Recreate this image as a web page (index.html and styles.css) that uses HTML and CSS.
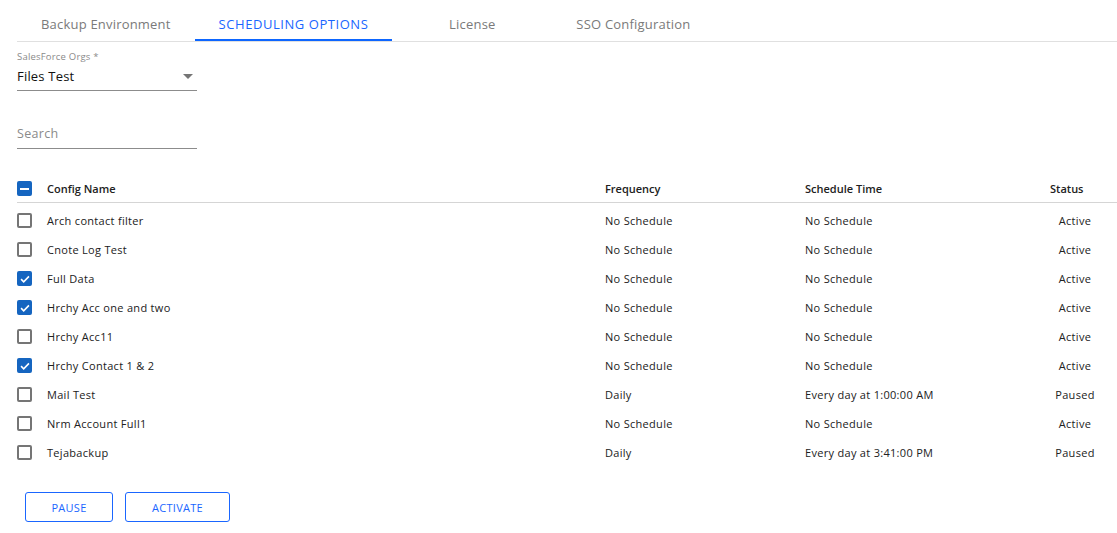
FILE: index.html
```html
<!DOCTYPE html>
<html>
<head>
<meta charset="utf-8">
<link rel="stylesheet" href="styles.css">
</head>
<body>
<div class="page">
  <nav class="tabs">
    <div class="tab">Backup Environment</div>
    <div class="tab active">SCHEDULING OPTIONS</div>
    <div class="tab">License</div>
    <div class="tab">SSO Configuration</div>
  </nav>

  <div class="field select-field">
    <div class="field-label">SalesForce Orgs *</div>
    <div class="field-input">
      <span class="value">Files Test</span>
      <svg class="caret" width="10" height="5" viewBox="0 0 10 5"><path d="M0 0h10L5 5z" fill="#757575"/></svg>
    </div>
  </div>

  <div class="field search-field">
    <div class="field-input">
      <span class="placeholder">Search</span>
    </div>
  </div>

  <div class="table">
    <div class="row head">
      <div class="c-check"><span class="cb indeterminate"></span></div>
      <div class="c-name">Config Name</div>
      <div class="c-freq">Frequency</div>
      <div class="c-time">Schedule Time</div>
      <div class="c-status">Status</div>
    </div>
    <div class="rows">
      <div class="row">
        <div class="c-check"><span class="cb"></span></div>
        <div class="c-name">Arch contact filter</div>
        <div class="c-freq">No Schedule</div>
        <div class="c-time">No Schedule</div>
        <div class="c-status">Active</div>
      </div>
      <div class="row">
        <div class="c-check"><span class="cb"></span></div>
        <div class="c-name">Cnote Log Test</div>
        <div class="c-freq">No Schedule</div>
        <div class="c-time">No Schedule</div>
        <div class="c-status">Active</div>
      </div>
      <div class="row">
        <div class="c-check"><span class="cb checked"><svg viewBox="0 0 16 16" width="16" height="16"><path d="M3.5 8.2l3 3 6-6.2" fill="none" stroke="#fff" stroke-width="1.8"/></svg></span></div>
        <div class="c-name">Full Data</div>
        <div class="c-freq">No Schedule</div>
        <div class="c-time">No Schedule</div>
        <div class="c-status">Active</div>
      </div>
      <div class="row">
        <div class="c-check"><span class="cb checked"><svg viewBox="0 0 16 16" width="16" height="16"><path d="M3.5 8.2l3 3 6-6.2" fill="none" stroke="#fff" stroke-width="1.8"/></svg></span></div>
        <div class="c-name">Hrchy Acc one and two</div>
        <div class="c-freq">No Schedule</div>
        <div class="c-time">No Schedule</div>
        <div class="c-status">Active</div>
      </div>
      <div class="row">
        <div class="c-check"><span class="cb"></span></div>
        <div class="c-name">Hrchy Acc11</div>
        <div class="c-freq">No Schedule</div>
        <div class="c-time">No Schedule</div>
        <div class="c-status">Active</div>
      </div>
      <div class="row">
        <div class="c-check"><span class="cb checked"><svg viewBox="0 0 16 16" width="16" height="16"><path d="M3.5 8.2l3 3 6-6.2" fill="none" stroke="#fff" stroke-width="1.8"/></svg></span></div>
        <div class="c-name">Hrchy Contact 1 &amp; 2</div>
        <div class="c-freq">No Schedule</div>
        <div class="c-time">No Schedule</div>
        <div class="c-status">Active</div>
      </div>
      <div class="row">
        <div class="c-check"><span class="cb"></span></div>
        <div class="c-name">Mail Test</div>
        <div class="c-freq">Daily</div>
        <div class="c-time">Every day at 1:00:00 AM</div>
        <div class="c-status">Paused</div>
      </div>
      <div class="row">
        <div class="c-check"><span class="cb"></span></div>
        <div class="c-name">Nrm Account Full1</div>
        <div class="c-freq">No Schedule</div>
        <div class="c-time">No Schedule</div>
        <div class="c-status">Active</div>
      </div>
      <div class="row">
        <div class="c-check"><span class="cb"></span></div>
        <div class="c-name">Tejabackup</div>
        <div class="c-freq">Daily</div>
        <div class="c-time">Every day at 3:41:00 PM</div>
        <div class="c-status">Paused</div>
      </div>
    </div>
  </div>

  <div class="actions">
    <button class="btn btn-pause">PAUSE</button>
    <button class="btn btn-activate">ACTIVATE</button>
  </div>
</div>
</body>
</html>
```

FILE: styles.css
```css
* { box-sizing: border-box; }
html, body { margin: 0; padding: 0; background: #fff; }
body {
  font-family: "Open Sans", "Liberation Sans", sans-serif;
  color: #212121;
  width: 1117px;
  height: 533px;
  overflow: hidden;
}
.page { padding-left: 17px; }

.tabs {
  display: flex;
  border-bottom: 1px solid #e0e0e0;
  height: 42px;
}
.tab {
  min-width: 160px;
  padding: 7px 24px 0;
  height: 41px;
  display: flex;
  align-items: center;
  justify-content: center;
  font-size: 13px;
  color: #7a7a7a;
  letter-spacing: 0.2px;
}
.tab.active {
  color: #1a66ff;
  border-bottom: 2px solid #0d66ff;
  padding-top: 9px;
  letter-spacing: 0.55px;
}

.field { width: 180px; }
.select-field { margin-top: 9px; }
.field-label {
  font-size: 9.5px;
  color: #8a8a8a;
  line-height: 12px;
  letter-spacing: 0.2px;
}
.field-input {
  display: flex;
  align-items: center;
  justify-content: space-between;
  border-bottom: 1px solid #8c8c8c;
  height: 28px;
  padding-bottom: 2px;
}
.value { font-size: 13px; color: #111; letter-spacing: 0.2px; }
.caret { margin-right: 4px; margin-top: 2px; }

.search-field { margin-top: 30px; }
.search-field .field-input { height: 28px; }
.placeholder { font-size: 12.5px; color: #8a8a8a; letter-spacing: 0.3px; }

.table { margin-top: 28px; width: 1100px; }
.row {
  display: flex;
  align-items: center;
  height: 29px;
  font-size: 11px;
  color: #212121;
  letter-spacing: 0.3px;
}
.row.head {
  height: 26px;
  font-weight: 600;
  border-bottom: 1px solid #d5d5d5;
  padding-bottom: 2px;
  letter-spacing: 0;
}
.rows { padding-top: 3px; }
.c-check { width: 30px; display: flex; align-items: center; }
.c-name { width: 558px; }
.c-freq { width: 200px; }
.c-time { width: 245px; }
.c-status { flex: 1; }
.row:not(.head) .c-status { flex: none; width: 50px; text-align: center; }

.cb {
  width: 15px;
  height: 15px;
  border: 2px solid #757575;
  border-radius: 2px;
  display: inline-flex;
  align-items: center;
  justify-content: center;
}
.cb.checked, .cb.indeterminate {
  background: #1565c0;
  border-color: #1565c0;
}
.cb.checked svg { width: 14px; height: 14px; flex: none; }
.cb.indeterminate::after {
  content: "";
  width: 9px;
  height: 2px;
  background: #fff;
}

.actions {
  display: flex;
  gap: 12px;
  margin-top: 25px;
  margin-left: 8px;
}
.btn {
  font-family: inherit;
  font-size: 11px;
  color: #1a66ff;
  background: #fff;
  border: 1px solid #1a66ff;
  border-radius: 3px;
  height: 30px;
  padding: 0;
  letter-spacing: 0.3px;
}
.btn-pause { width: 88px; }
.btn-activate { width: 105px; }
```
